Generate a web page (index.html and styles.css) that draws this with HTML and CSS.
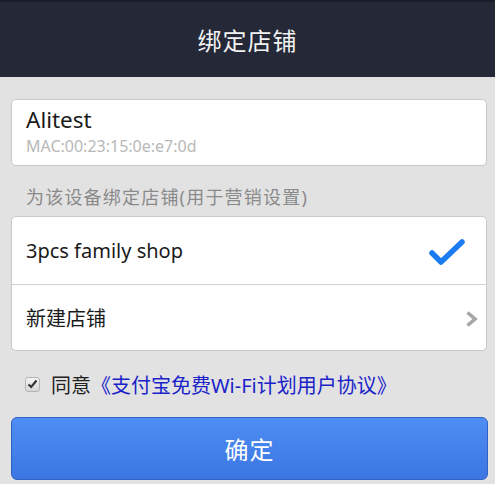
FILE: index.html
```html
<!DOCTYPE html>
<html lang="zh-CN">
<head>
    <meta charset="UTF-8">
    <meta name="viewport" content="width=device-width, initial-scale=1.0">
    <title>绑定店铺</title>
    <link rel="stylesheet" href="styles.css">
</head>
<body>
    <!-- Title bar -->
    <div class="topbar">绑定店铺</div>

    <div class="page">
        <!-- Device -->
        <div class="card device">
            <div class="device-name">Alitest</div>
            <div class="device-mac">MAC:00:23:15:0e:e7:0d</div>
        </div>

        <div class="section-title">为该设备绑定店铺(用于营销设置)</div>

        <!-- Shop list -->
        <div class="card shops">
            <div class="shop-row">
                <span>3pcs family shop</span>
                <svg class="check" width="36" height="28" viewBox="0 0 36 28">
                    <path d="M3 15 L12 24 L33 4" fill="none" stroke="#1a7cf0" stroke-width="5.5" stroke-linecap="round" stroke-linejoin="round"/>
                </svg>
            </div>
            <div class="shop-row">
                <span>新建店铺</span>
                <svg class="chevron" width="13" height="16" viewBox="0 0 13 16">
                    <path d="M2.5 1.5 L10 8 L2.5 14.5" fill="none" stroke="#a6a6a6" stroke-width="3.6"/>
                </svg>
            </div>
        </div>

        <!-- Agreement -->
        <label class="agree">
            <span class="tick-box">
                <svg width="11" height="10" viewBox="0 0 11 10">
                    <path d="M1.5 5.5 L4.2 8 L9.5 1.5" fill="none" stroke="#333" stroke-width="2.2"/>
                </svg>
            </span>
            <span>同意<a href="#" class="agree-link">《支付宝免费Wi-Fi计划用户协议》</a></span>
        </label>

        <button class="confirm-btn">确定</button>
    </div>
</body>
</html>
```

FILE: styles.css
```css
* {
    margin: 0;
    padding: 0;
    box-sizing: border-box;
}
body {
    font-family: "Noto Sans", "Open Sans", "Noto Sans CJK SC", sans-serif;
    background-color: #e2e2e3;
    color: #1a1a1a;
    width: 495px;
    height: 484px;
    overflow: hidden;
}
.topbar {
    height: 77px;
    background-color: #242837;
    border-top: 2px solid #1a1d28;
    color: #f2f2f2;
    font-size: 24px;
    display: flex;
    align-items: center;
    justify-content: center;
    letter-spacing: 1px;
}
.page {
    padding: 22px 8px 0 11px;
}
.card {
    background: #fff;
    border: 1px solid #c9c9cb;
    border-radius: 5px;
}
.device {
    height: 67px;
    padding: 5px 14px 0 14px;
}
.device-name {
    font-size: 22.5px;
    line-height: 30px;
}
.device-mac {
    font-size: 16px;
    line-height: 22px;
    color: #b8b8b8;
}
.section-title {
    font-size: 18px;
    letter-spacing: 1.2px;
    color: #8a8a8a;
    padding: 17px 0 0 15px;
    height: 50px;
}
.shops {
    height: 135px;
}
.shop-row {
    height: 67px;
    display: flex;
    align-items: center;
    justify-content: space-between;
    padding: 0 9px 0 14px;
    font-size: 20px;
}
.shop-row + .shop-row {
    border-top: 1px solid #d2d2d4;
    height: 66px;
    padding-right: 8px;
}
.check {
    margin-right: 12px;
    margin-top: 2px;
}
.chevron {
    margin-top: 2px;
}
.agree {
    display: flex;
    align-items: center;
    height: 66px;
    padding-left: 14px;
    font-size: 20px;
    color: #222;
    cursor: pointer;
}
.tick-box {
    width: 15px;
    height: 15px;
    margin-right: 11px;
    border: 1px solid #b5b5b5;
    border-radius: 3px;
    background: linear-gradient(#f4f4f4, #d6d6d6);
    display: flex;
    align-items: center;
    justify-content: center;
}
.agree-link {
    color: #1a22c8;
    text-decoration: none;
}
.confirm-btn {
    display: block;
    width: 477px;
    height: 63px;
    border: 1px solid #2f62c4;
    border-radius: 6px;
    background: linear-gradient(#4e8df3, #3b76e2);
    color: #fff;
    font-family: inherit;
    font-size: 24px;
    letter-spacing: 1px;
    cursor: pointer;
}
```
